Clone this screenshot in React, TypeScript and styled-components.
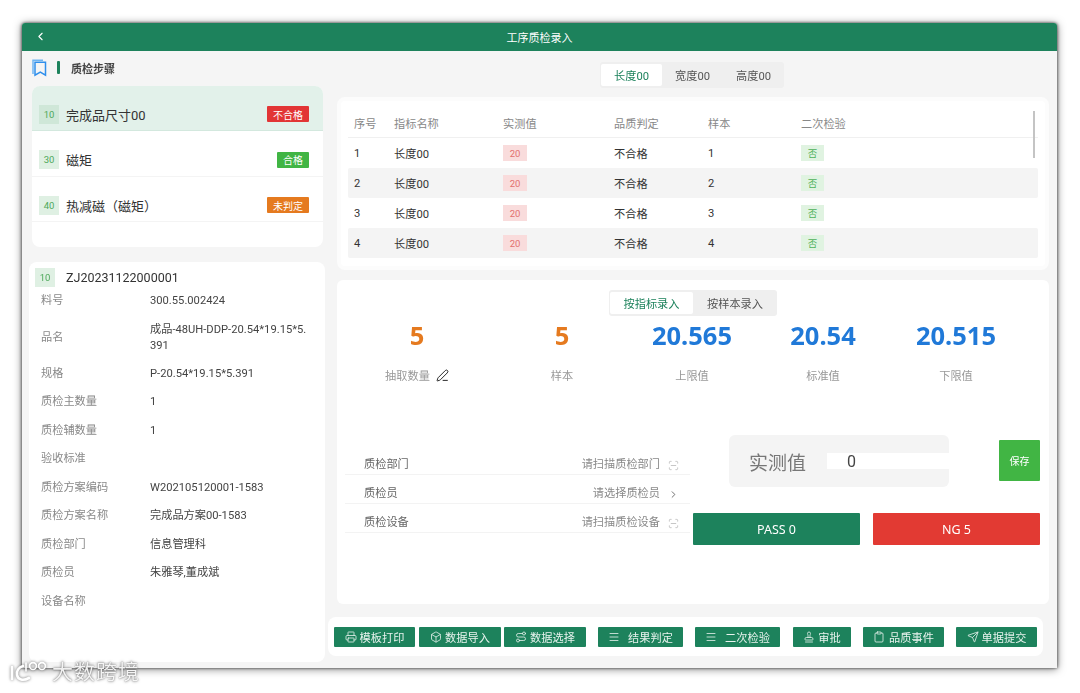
import React from "react";
import styled, { createGlobalStyle } from "styled-components";
import { ChevronLeft, ChevronRight, PenLine, ScanLine, Printer, Box, Route, Menu, Stamp, Clipboard, Send } from "lucide-react";

const Global = createGlobalStyle`
  html, body { margin: 0; padding: 0; background: #fff; }
  body { font-family: Roboto, "Noto Sans CJK SC", sans-serif; color: #333; }
  * { box-sizing: border-box; }
`;

const Page = styled.div`
  width: 1080px;
  height: 693px;
  padding: 23px 23px 25px 22px;
  position: relative;
  overflow: hidden;
  filter: blur(0.35px);
`;
const Win = styled.div`
  height: 645px;
  background: #f5f5f5;
  border-radius: 3px 3px 0 0;
  box-shadow: 0 1px 9px rgba(0,0,0,.5), -1px 0 3px rgba(0,0,0,.4), 1px 0 3px rgba(0,0,0,.4);
  display: flex;
  flex-direction: column;
  overflow: hidden;
`;
const Header = styled.header`
  height: 28px;
  flex: none;
  background: #1d825c;
  color: #fff;
  display: flex;
  align-items: center;
  justify-content: center;
  font-size: 11px;
  position: relative;
`;
const Back = styled.span`
  position: absolute;
  left: 12px;
  top: 7px;
  display: flex;
`;
const Body = styled.div`
  flex: 1;
  display: flex;
  min-height: 0;
`;
const Left = styled.aside`
  width: 305px;
  flex: none;
  padding: 0 2px 0 7px;
  display: flex;
  flex-direction: column;
`;
const StepTitle = styled.div`
  height: 35px;
  padding: 0 0 2px 3px;
  display: flex;
  align-items: center;
  font-size: 11px;
  font-weight: 700;
  color: #444;
`;
const TitleBar = styled.i`
  width: 3px;
  height: 13px;
  margin: 0 11px 0 10px;
  background: #1d825c;
  border-radius: 1px;
`;
const StepsCard = styled.div`
  margin: 0 2px 0 3px;
  height: 161px;
  background: #fff;
  border-radius: 8px;
  overflow: hidden;
`;
const StepRow = styled.div<{ $active?: boolean; $h: number }>`
  height: ${p => p.$h}px;
  padding: 12px 14px 0 7px;
  display: flex;
  align-items: center;
  gap: 7px;
  font-size: 13px;
  color: #333;
  background: ${p => (p.$active ? "#e2f1ea" : "#fff")};
  border-bottom: 1px solid ${p => (p.$active ? "#d3e8de" : "#f4f4f4")};
`;
const StepNo = styled.span<{ $deep?: boolean }>`
  width: 20px;
  height: 19px;
  display: flex;
  align-items: center;
  justify-content: center;
  font-size: 9.5px;
  color: #4da85a;
  background: ${p => (p.$deep ? "#cfe7d8" : "#dff0e3")};
  flex: none;
`;
const StepName = styled.span`
  flex: 1;
`;
const Status = styled.span<{ $bg: string }>`
  height: 16px;
  padding: 0 6px;
  display: flex;
  align-items: center;
  font-size: 10px;
  color: #fff;
  background: ${p => p.$bg};
  border-radius: 1px;
`;
const InfoCard = styled.div`
  flex: 1;
  margin: 15px 0 6px;
  background: #fff;
  border-radius: 8px;
  padding: 6px 13px 0 6px;
`;
const InfoHead = styled.div`
  height: 18px;
  display: flex;
  align-items: center;
  gap: 11px;
  font-size: 12.5px;
  color: #333;
  margin-bottom: 1px;
`;
const InfoRow = styled.div<{ $h?: number }>`
  min-height: ${p => p.$h ?? 28.5}px;
  padding-left: 6px;
  display: grid;
  grid-template-columns: 109px 1fr;
  align-items: center;
  font-size: 11.2px;
  line-height: 16px;
`;
const InfoKey = styled.span`
  color: #888;
`;
const InfoVal = styled.span`
  color: #444;
  word-break: break-all;
`;
const Right = styled.main`
  flex: 1;
  min-width: 0;
  display: flex;
  flex-direction: column;
`;
const TabLine = styled.div<{ $pad: number; $h: number; $ml: number }>`
  display: flex;
  height: ${p => p.$h}px;
  margin-left: ${p => p.$ml}px;
  margin-top: ${p => p.$pad}px;
  width: fit-content;
  background: #efefef;
  border-radius: 3px;
`;
const TabItem = styled.div<{ $on?: boolean; $w: number }>`
  width: ${p => p.$w}px;
  margin: ${p => (p.$on ? "2px 0 2px 1px" : "0")};
  display: flex;
  align-items: center;
  justify-content: center;
  font-size: 11.2px;
  color: ${p => (p.$on ? "#1d825c" : "#555")};
  background: ${p => (p.$on ? "#fff" : "transparent")};
  border-radius: 2px;
`;
const TableCard = styled.section`
  margin: 9px 8px 0 10px;
  height: 173px;
  padding: 7px 7px 0;
  background: #fff;
  border: 4px solid #fcfcfc;
  border-radius: 8px;
  position: relative;
`;
const Scroll = styled.i`
  position: absolute;
  top: 10px;
  right: 10px;
  width: 2px;
  height: 47px;
  background: #c4c4c4;
`;
const Row = styled.div<{ $head?: boolean; $alt?: boolean }>`
  height: 30px;
  padding-left: 6px;
  display: grid;
  grid-template-columns: 40px 109px 111px 94px 93px 1fr;
  align-items: center;
  font-size: 11.2px;
  color: ${p => (p.$head ? "#888" : "#333")};
  background: ${p => (p.$alt ? "#f4f4f4" : "transparent")};
  border-bottom: ${p => (p.$head ? "1px solid #f0f0f0" : "none")};
  border-radius: ${p => (p.$alt ? "2px" : "0")};
`;
const Chip = styled.span<{ $ng?: boolean }>`
  width: ${p => (p.$ng ? 24 : 23)}px;
  height: 16px;
  display: flex;
  align-items: center;
  justify-content: center;
  font-size: 9.5px;
  color: ${p => (p.$ng ? "#e2706f" : "#4fb15a")};
  background: ${p => (p.$ng ? "#f9dcdc" : "#e0f3e1")};
`;
const EntryPanel = styled.section`
  margin: 10px 8px 0 10px;
  height: 324px;
  background: #fff;
  border-radius: 6px;
  padding-top: 10px;
`;
const Stats = styled.div`
  margin-top: 4px;
  display: grid;
  grid-template-columns: 160px 130px 130px 132px 134px;
  text-align: center;
`;
const Stat = styled.div`
  display: flex;
  flex-direction: column;
  align-items: center;
`;
const StatNum = styled.div<{ $c: string }>`
  height: 30px;
  font-family: "Noto Sans", sans-serif;
  font-size: 25.5px;
  line-height: 30px;
  font-weight: 700;
  color: ${p => p.$c};
`;
const StatLabel = styled.div`
  margin-top: 17px;
  height: 16px;
  display: flex;
  align-items: center;
  gap: 6px;
  font-size: 11.2px;
  color: #999;
  svg { color: #222; }
`;
const Lower = styled.div`
  margin-top: 52px;
  display: flex;
  padding-left: 8px;
`;
const FormCol = styled.div`
  width: 345px;
  margin-right: 3px;
  flex: none;
  padding-top: 9px;
`;
const FormRow = styled.div<{ $h: number }>`
  height: ${p => p.$h}px;
  padding: 0 11px 1px 19px;
  display: flex;
  align-items: flex-end;
  font-size: 11.2px;
  line-height: 16px;
  color: #666;
  border-bottom: 1px solid #f3f3f3;
  svg { margin-bottom: 2px; }
`;
const FormKey = styled.span`
  flex: 1;
`;
const FormHint = styled.span`
  color: #888;
  margin-right: 8px;
`;
const EntryCol = styled.div`
  flex: 1;
  padding-right: 9px;
`;
const EntryTop = styled.div`
  height: 52px;
  padding-left: 36px;
  display: flex;
  align-items: center;
  justify-content: space-between;
`;
const ValueBox = styled.div`
  width: 220px;
  height: 52px;
  background: #f4f4f4;
  border-radius: 6px;
  padding-left: 20px;
  display: flex;
  align-items: center;
  font-size: 19px;
  color: #777;
`;
const ValueInput = styled.div`
  flex: 1;
  height: 16px;
  margin-left: 21px;
  padding-left: 20px;
  background: #fff;
  display: flex;
  align-items: center;
  font-size: 16px;
  color: #444;
`;
const SaveBtn = styled.button`
  width: 41px;
  height: 41px;
  margin-bottom: 2px;
  border: 0;
  padding: 0;
  background: #41b544;
  color: #fff;
  font: inherit;
  font-size: 10px;
  border-radius: 1px;
`;
const Verdicts = styled.div`
  margin-top: 26px;
  display: flex;
  justify-content: space-between;
`;
const Verdict = styled.button<{ $bg: string }>`
  width: 167px;
  height: 32px;
  border: 0;
  padding: 0;
  background: ${p => p.$bg};
  color: #fff;
  font-family: "Noto Sans", sans-serif;
  font-size: 12.5px;
  border-radius: 1px;
`;
const Toolbar = styled.footer`
  margin: 13px 0 0 1px;
  height: 39px;
  padding-left: 6px;
  background: #fff;
  border-radius: 8px;
  display: flex;
  align-items: center;
  width: 715px;
`;
const ToolBtn = styled.button<{ $w: number; $gap: number; $ml: number }>`
  width: ${p => p.$w}px;
  margin-left: ${p => p.$ml}px;
  height: 20px;
  flex: none;
  border: 0;
  padding: 0;
  background: #1d825c;
  color: #e8f3ee;
  font: inherit;
  font-size: 11.2px;
  border-radius: 1px;
  display: flex;
  align-items: center;
  justify-content: center;
  gap: ${p => p.$gap}px;
`;
const Watermark = styled.div`
  position: absolute;
  left: 9px;
  top: 659px;
  display: flex;
  align-items: center;
  gap: 2px;
  font-size: 21px;
  line-height: 26px;
  letter-spacing: 1px;
  color: rgba(255,255,255,.92);
  text-shadow: 0 0 3px rgba(0,0,0,.55), 0 0 1px rgba(0,0,0,.45);
  svg { filter: drop-shadow(0 0 1.5px rgba(0,0,0,.55)); }
`;

const rows = [1, 2, 3, 4];
const info: [string, string, number?][] = [
  ["料号", "300.55.002424"],
  ["品名", "成品-48UH-DDP-20.54*19.15*5.391", 44],
  ["规格", "P-20.54*19.15*5.391"],
  ["质检主数量", "1"],
  ["质检辅数量", "1"],
  ["验收标准", ""],
  ["质检方案编码", "W202105120001-1583"],
  ["质检方案名称", "完成品方案00-1583"],
  ["质检部门", "信息管理科"],
  ["质检员", "朱雅琴,董成斌"],
  ["设备名称", ""],
];
const tools = [
  { Icon: Printer, t: "模板打印", w: 81, gap: 3, ml: 0 },
  { Icon: Box, t: "数据导入", w: 82, gap: 3, ml: 4 },
  { Icon: Route, t: "数据选择", w: 82, gap: 3, ml: 3 },
  { Icon: Menu, t: "结果判定", w: 85, gap: 8, ml: 12 },
  { Icon: Menu, t: "二次检验", w: 85, gap: 8, ml: 12 },
  { Icon: Stamp, t: "审批", w: 58, gap: 3, ml: 13 },
  { Icon: Clipboard, t: "品质事件", w: 81, gap: 4, ml: 12 },
  { Icon: Send, t: "单据提交", w: 81, gap: 3, ml: 12 },
];

export default function App() {
  return (
    <Page>
      <Global />
      <Win>
        <Header>
          <Back><ChevronLeft size={13} /></Back>
          工序质检录入
        </Header>
        <Body>
          <Left>
            <StepTitle>
              <svg width="15" height="18" viewBox="0 0 15 18" fill="none" strokeWidth="1.5">
                <path d="M1 15V1.2H11" stroke="#6fb5f2" />
                <path d="M3 3.2h10.5v13l-5.2-3-5.3 3z" stroke="#2f8fec" />
              </svg>
              <TitleBar />
              质检步骤
            </StepTitle>
            <StepsCard>
              <StepRow $active $h={45}>
                <StepNo $deep>10</StepNo><StepName>完成品尺寸00</StepName><Status $bg="#e23535">不合格</Status>
              </StepRow>
              <StepRow $h={46}>
                <StepNo>30</StepNo><StepName>磁矩</StepName><Status $bg="#41b544">合格</Status>
              </StepRow>
              <StepRow $h={45}>
                <StepNo>40</StepNo><StepName>热减磁（磁矩）</StepName><Status $bg="#e57a1f">未判定</Status>
              </StepRow>
            </StepsCard>
            <InfoCard>
              <InfoHead><StepNo>10</StepNo>ZJ20231122000001</InfoHead>
              {info.map(([k, v, h]) => (
                <InfoRow key={k} $h={h}>
                  <InfoKey>{k}</InfoKey>
                  <InfoVal>{v}</InfoVal>
                </InfoRow>
              ))}
            </InfoCard>
          </Left>
          <Right>
            <TabLine $pad={11} $h={26} $ml={273}>
              <TabItem $on $w={61}>长度00</TabItem>
              <TabItem $w={61}>宽度00</TabItem>
              <TabItem $w={61}>高度00</TabItem>
            </TabLine>
            <TableCard>
              <Scroll />
              <Row $head>
                <span>序号</span><span>指标名称</span><span>实测值</span><span>品质判定</span><span>样本</span><span>二次检验</span>
              </Row>
              {rows.map(n => (
                <Row key={n} $alt={n % 2 === 0}>
                  <span>{n}</span><span>长度00</span><span><Chip $ng>20</Chip></span><span>不合格</span><span>{n}</span><span><Chip>否</Chip></span>
                </Row>
              ))}
            </TableCard>
            <EntryPanel>
              <TabLine $pad={0} $h={26} $ml={272}>
                <TabItem $on $w={83}>按指标录入</TabItem>
                <TabItem $w={84}>按样本录入</TabItem>
              </TabLine>
              <Stats>
                <Stat><StatNum $c="#e57a1f">5</StatNum><StatLabel>抽取数量 <PenLine size={13} strokeWidth={1.8} /></StatLabel></Stat>
                <Stat><StatNum $c="#e57a1f">5</StatNum><StatLabel>样本</StatLabel></Stat>
                <Stat><StatNum $c="#2079d8">20.565</StatNum><StatLabel>上限值</StatLabel></Stat>
                <Stat><StatNum $c="#2079d8">20.54</StatNum><StatLabel>标准值</StatLabel></Stat>
                <Stat><StatNum $c="#2079d8">20.515</StatNum><StatLabel>下限值</StatLabel></Stat>
              </Stats>
              <Lower>
                <FormCol>
                  <FormRow $h={31}><FormKey>质检部门</FormKey><FormHint>请扫描质检部门</FormHint><ScanLine size={11} color="#999" strokeWidth={1.2} /></FormRow>
                  <FormRow $h={29}><FormKey>质检员</FormKey><FormHint>请选择质检员</FormHint><ChevronRight size={11} color="#666" /></FormRow>
                  <FormRow $h={29}><FormKey>质检设备</FormKey><FormHint>请扫描质检设备</FormHint><ScanLine size={11} color="#999" strokeWidth={1.2} /></FormRow>
                </FormCol>
                <EntryCol>
                  <EntryTop>
                    <ValueBox>实测值<ValueInput>0</ValueInput></ValueBox>
                    <SaveBtn>保存</SaveBtn>
                  </EntryTop>
                  <Verdicts>
                    <Verdict $bg="#1d825c">PASS 0</Verdict>
                    <Verdict $bg="#e23a33">NG 5</Verdict>
                  </Verdicts>
                </EntryCol>
              </Lower>
            </EntryPanel>
            <Toolbar>
              {tools.map(({ Icon, t, w, gap, ml }) => (
                <ToolBtn key={t} $w={w} $gap={gap} $ml={ml}><Icon size={12} strokeWidth={1.6} />{t}</ToolBtn>
              ))}
            </Toolbar>
          </Right>
        </Body>
      </Win>
      <Watermark>
        <svg width="41" height="26" viewBox="0 0 41 26" fill="none" stroke="#fff" strokeLinecap="round">
          <path d="M3 8v12" strokeWidth="2.6" />
          <path d="M14 7c-4 1-7 5-6 9 1 5 6 6 12 3" strokeWidth="2.6" />
          <path d="M17 4v8" strokeWidth="1.6" />
          <circle cx="24" cy="7" r="3.4" strokeWidth="1.6" />
          <circle cx="33" cy="7" r="3.4" strokeWidth="1.6" />
        </svg>
        大数跨境
      </Watermark>
    </Page>
  );
}
